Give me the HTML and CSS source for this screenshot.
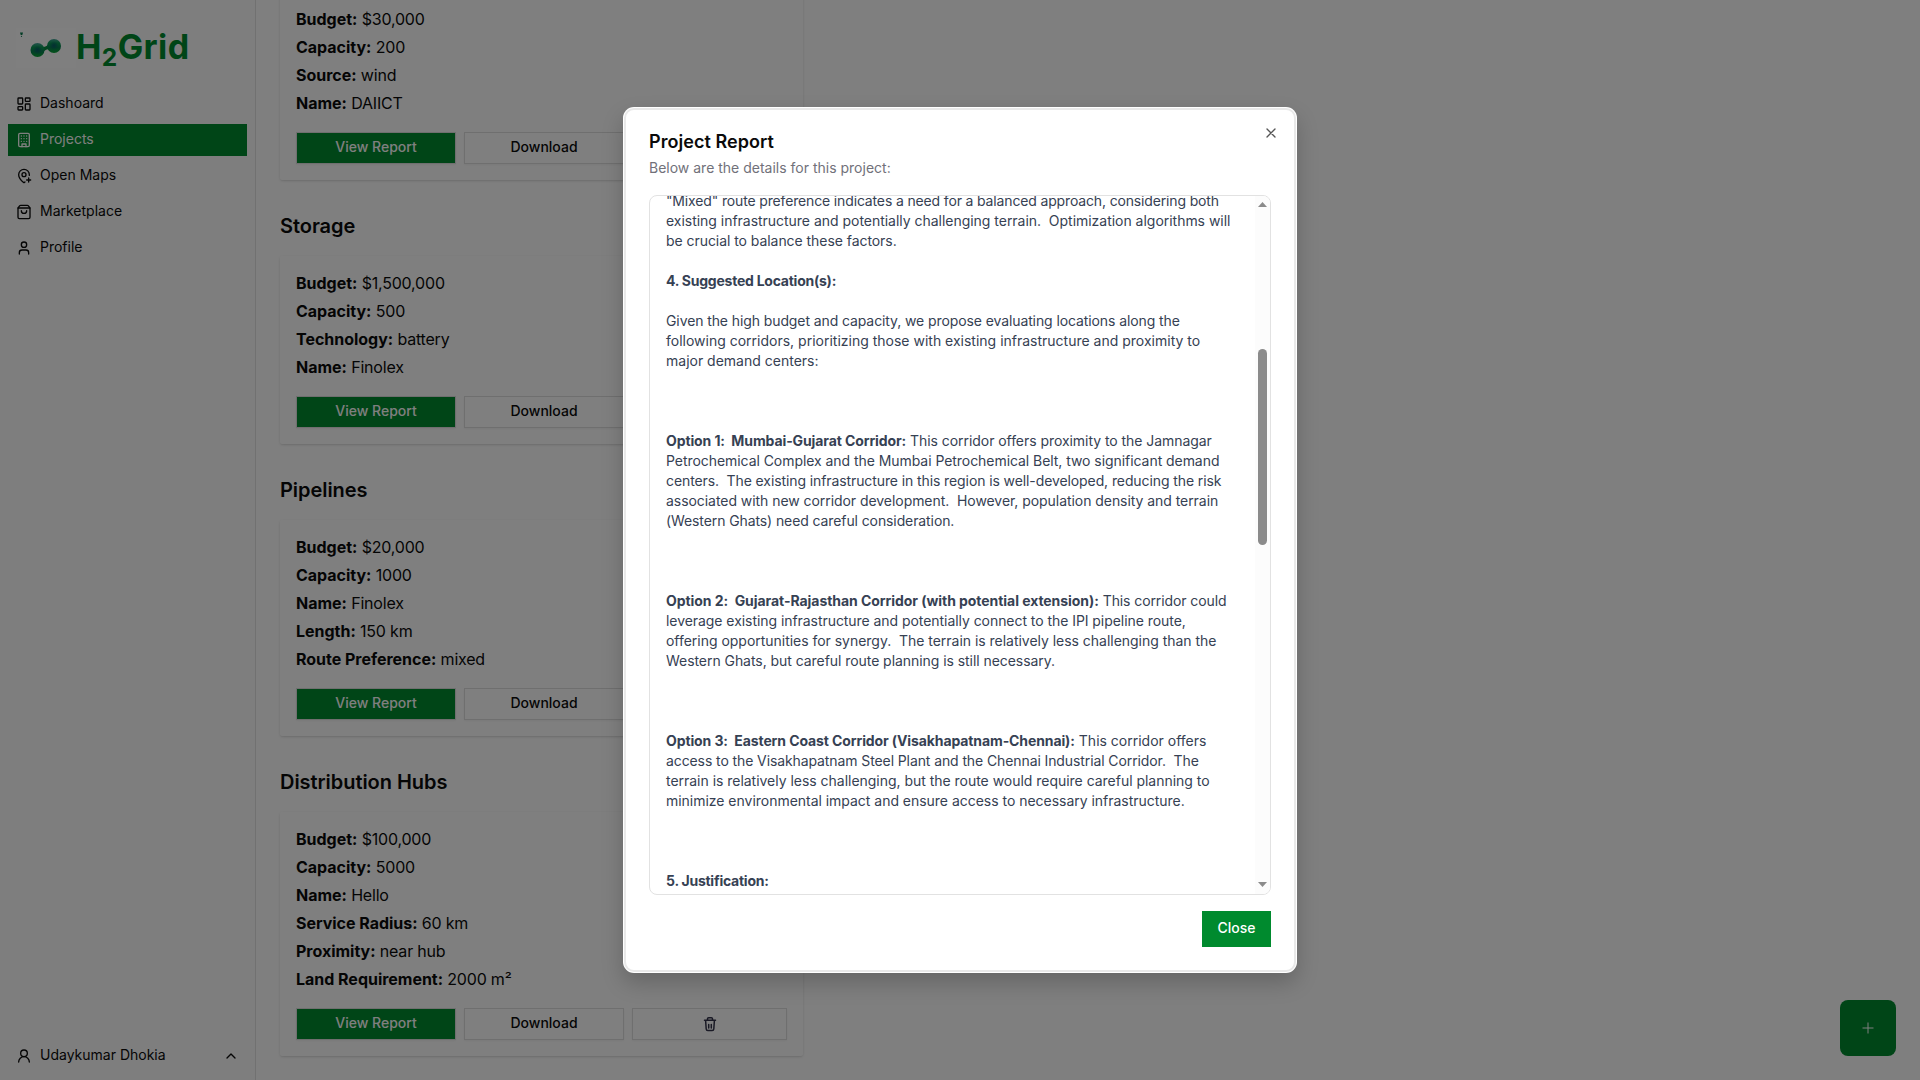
FILE: index.html
```html
<!DOCTYPE html>
<html lang="en">
<head>
<meta charset="utf-8">
<title>H2Grid – Projects</title>
<link rel="stylesheet" href="styles.css">
</head>
<body>
<div class="app">
  <aside class="sidebar">
    <div class="brand">
      <svg class="brand-mark" viewBox="0 0 60 40">
        <defs>
          <linearGradient id="ballTop" x1="0" y1="0" x2="0" y2="1">
            <stop offset="0" stop-color="#48a49a"/><stop offset=".3" stop-color="#0a9a55"/><stop offset=".6" stop-color="#078050"/><stop offset="1" stop-color="#08a335"/>
          </linearGradient>
          <radialGradient id="core"><stop offset="0" stop-color="#0a5c68"/><stop offset="1" stop-color="#0a5c68" stop-opacity="0"/></radialGradient>
        </defs>
        <path d="M24 18.500c4 1.500 7-.5 10-3l2 6c-3-1-6-.5-9 3z" fill="#078a3f"/>
        <circle cx="21.500" cy="22" r="7" fill="url(#ballTop)"/>
        <circle cx="38" cy="18" r="7" fill="url(#ballTop)"/>
        <circle cx="21.500" cy="22" r="4.500" fill="url(#core)"/>
        <circle cx="38" cy="17.500" r="4.500" fill="url(#core)"/>
        <path d="M4 4.500h3l-.7 2.500h-1.600z" fill="#087a4c"/>
        <circle cx="5.500" cy="8.300" r=".6" fill="#087a4c"/>
      </svg>
      <span class="brand-name">H<span class="brand-sub">2</span>Grid</span>
    </div>
    <nav class="nav">
      <a class="nav-item"><svg class="icon" viewBox="0 0 24 24"><rect x="3" y="3" width="7" height="9" rx="1"/><rect x="14" y="3" width="7" height="5" rx="1"/><rect x="14" y="12" width="7" height="9" rx="1"/><rect x="3" y="16" width="7" height="5" rx="1"/></svg><span>Dashoard</span></a>
      <a class="nav-item active"><svg class="icon" viewBox="0 0 24 24"><rect x="4" y="2" width="16" height="20" rx="2"/><path d="M9 22v-4h6v4M8 6h.01M16 6h.01M12 6h.01M12 10h.01M12 14h.01M16 10h.01M16 14h.01M8 10h.01M8 14h.01"/></svg><span>Projects</span></a>
      <a class="nav-item"><svg class="icon" viewBox="0 0 24 24"><path d="M19.914 11.105A7.298 7.298 0 0 0 20 10a8 8 0 0 0-16 0c0 4.993 5.539 10.193 7.399 11.799a1 1 0 0 0 1.202 0 32 32 0 0 0 .824-.738"/><circle cx="12" cy="10" r="3"/><path d="M16 18h6M19 15v6"/></svg><span>Open Maps</span></a>
      <a class="nav-item"><svg class="icon" viewBox="0 0 24 24"><path d="M16 10a4 4 0 0 1-8 0M3.103 6.034h17.794"/><path d="M3.400 5.467a2 2 0 0 0-.4 1.200V20a2 2 0 0 0 2 2h14a2 2 0 0 0 2-2V6.667a2 2 0 0 0-.4-1.200l-2-2.667A2 2 0 0 0 17 2H7a2 2 0 0 0-1.600.8z"/></svg><span>Marketplace</span></a>
      <a class="nav-item"><svg class="icon" viewBox="0 0 24 24"><circle cx="12" cy="7" r="4"/><path d="M19 21v-2a4 4 0 0 0-4-4H9a4 4 0 0 0-4 4v2"/></svg><span>Profile</span></a>
    </nav>
    <div class="nav-item account"><svg class="icon" viewBox="0 0 24 24"><circle cx="12" cy="8" r="5"/><path d="M20 21a8 8 0 0 0-16 0"/></svg><span>Udaykumar Dhokia</span><svg class="icon chevron" viewBox="0 0 24 24"><path d="m18 15-6-6-6 6"/></svg></div>
  </aside>

  <main class="main">
    <section class="card">
      <p><b>Budget:</b> $30,000</p>
      <p><b>Capacity:</b> 200</p>
      <p><b>Source:</b> wind</p>
      <p><b>Name:</b> DAIICT</p>
      <div class="actions"><button class="btn primary">View Report</button><button class="btn">Download</button><button class="btn"></button></div>
    </section>
    <h2>Storage</h2>
    <section class="card">
      <p><b>Budget:</b> $1,500,000</p>
      <p><b>Capacity:</b> 500</p>
      <p><b>Technology:</b> battery</p>
      <p><b>Name:</b> Finolex</p>
      <div class="actions"><button class="btn primary">View Report</button><button class="btn">Download</button><button class="btn"></button></div>
    </section>
    <h2>Pipelines</h2>
    <section class="card">
      <p><b>Budget:</b> $20,000</p>
      <p><b>Capacity:</b> 1000</p>
      <p><b>Name:</b> Finolex</p>
      <p><b>Length:</b> 150 km</p>
      <p><b>Route Preference:</b> mixed</p>
      <div class="actions"><button class="btn primary">View Report</button><button class="btn">Download</button><button class="btn"></button></div>
    </section>
    <h2>Distribution Hubs</h2>
    <section class="card">
      <p><b>Budget:</b> $100,000</p>
      <p><b>Capacity:</b> 5000</p>
      <p><b>Name:</b> Hello</p>
      <p><b>Service Radius:</b> 60 km</p>
      <p><b>Proximity:</b> near hub</p>
      <p><b>Land Requirement:</b> 2000 m²</p>
      <div class="actions"><button class="btn primary">View Report</button><button class="btn">Download</button><button class="btn"><svg class="trash" viewBox="0 0 14 16"><path d="M1.500 4.200h11M4.500 4V2.800Q4.500 1.700 5.600 1.700h2.800Q9.500 1.700 9.500 2.800V4M2.600 4.500l.6 8.500q.1 1.500 1.600 1.500h4.400q1.500 0 1.600-1.500l.6-8.500M5.700 8.500v3.500M8.300 8.500v3.500"/></svg></button></div>
    </section>
  </main>
  <button class="fab"><svg viewBox="0 0 12 12"><path d="M6 .5v11M.5 6h11"/></svg></button>
</div>

<div class="overlay">
  <div class="dialog">
    <div class="dialog-body">
      <header class="dialog-head">
        <div>
          <h1>Project Report</h1>
          <div class="subtitle">Below are the details for this project:</div>
        </div>
        <svg class="icon dismiss" viewBox="0 0 24 24"><path d="M18 6 6 18M6 6l12 12"/></svg>
      </header>
      <div class="report">
        <div class="report-text"><span class="t4">"Mixed" route preference indicates a need for a balanced approach, considering both</span>
<span class="t1">existing infrastructure and potentially challenging terrain.  Optimization algorithms will</span>
<span class="t2">be crucial to balance these factors.</span>

<b class="narrow">4. Suggested Location(s):</b>

<span class="t3">Given the high budget and capacity, we propose evaluating locations along the</span>
following corridors, prioritizing those with existing infrastructure and proximity to
major demand centers:



<b class="snug">Option 1:  Mumbai-Gujarat Corridor:</b><span class="t2"> This corridor offers proximity to the Jamnagar</span>
<span class="t2">Petrochemical Complex and the Mumbai Petrochemical Belt, two significant demand</span>
<span class="t3">centers.  The existing infrastructure in this region is well-developed, reducing the risk</span>
<span class="t2">associated with new corridor development.  However, population density and terrain</span>
<span class="t3">(Western Ghats) need careful consideration.</span>



<b>Option 2:  Gujarat-Rajasthan Corridor (with potential extension):</b><span class="t3"> This corridor could</span>
<span class="t2">leverage existing infrastructure and potentially connect to the IPI pipeline route,</span>
<span class="t1">offering opportunities for synergy.  The terrain is relatively less challenging than the</span>
<span class="t2">Western Ghats, but careful route planning is still necessary.</span>



<b class="snug">Option 3:  Eastern Coast Corridor (Visakhapatnam-Chennai):</b> This corridor offers
<span class="t3">access to the Visakhapatnam Steel Plant and the Chennai Industrial Corridor.  The</span>
<span class="t1">terrain is relatively less challenging, but the route would require careful planning to</span>
<span class="t1">minimize environmental impact and ensure access to necessary infrastructure.</span>



<b class="narrow">5. Justification:</b></div>
        <div class="scrollbar">
          <svg class="arrow" viewBox="0 0 9 5"><path d="M4.500 0 9 5H0z"/></svg>
          <div class="thumb"></div>
          <svg class="arrow end" viewBox="0 0 9 5"><path d="M0 0h9L4.500 5z"/></svg>
        </div>
      </div>
      <footer class="dialog-foot"><button class="close">Close</button></footer>
    </div>
  </div>
</div>
</body>
</html>
```
FILE: styles.css
```css
* { box-sizing: border-box; }
body { margin: 0; height: 1080px; overflow: hidden; background: #fff; color: #0a0a0a; font: 14px/20px Inter, "Liberation Sans", sans-serif; }
h1, h2, p { margin: 0; }
button { font: inherit; color: inherit; border: 0; padding: 0; }

.app { display: flex; height: 1080px; overflow: hidden; }
.icon { width: 16px; height: 16px; flex: none; fill: none; stroke: currentColor; stroke-width: 2; stroke-linecap: round; stroke-linejoin: round; }

.sidebar { width: 256px; flex: none; display: flex; flex-direction: column; padding: 8px 8px 0; background: #fdfdfd; border-right: 1px solid #e2e2e2; }
.brand { display: flex; align-items: center; height: 80px; padding-left: 8px; }
.brand-mark { width: 60px; height: 40px; flex: none; background: #fff; }
.brand-name { color: #008a2e; font-size: 34px; font-weight: 700; line-height: 40px; letter-spacing: .4px; }
.brand-sub { font-size: 24.500px; position: relative; top: 7px; }
.nav { display: flex; flex-direction: column; gap: 4px; }
.nav-item { display: flex; align-items: center; gap: 8px; height: 32px; padding: 0 8px; }
.nav-item span { padding-bottom: 2px; }
.nav-item.active { background: #008a2e; color: #fff; }
.nav-item.account { margin-top: auto; height: 48px; }
.chevron { margin-left: auto; }

.main { width: 571px; margin-top: -8px; padding: 0 24px; }
.card { padding: 15px 16px 16px; border-radius: 2px; box-shadow: 0 1px 3px rgba(0, 0, 0, .12), 0 1px 2px -1px rgba(0, 0, 0, .12); font-size: 16px; line-height: 24px; letter-spacing: -.2px; }
.card p + p { margin-top: 4px; }
.card b { font-weight: 700; letter-spacing: -.02px; }
.main h2 { margin: 32px 0 16px; font-size: 20px; font-weight: 600; line-height: 28px; letter-spacing: -.05px; }
.actions { display: grid; grid-template-columns: 160px 160px 1fr; gap: 8px; margin-top: 17px; letter-spacing: 0; }
.btn { display: flex; align-items: center; justify-content: center; height: 32px; padding-bottom: 2px; background: transparent; border: 1px solid #dedede; font-size: 14px; font-weight: 500; line-height: 20px; box-shadow: 0 1px 2px rgba(0, 0, 0, .05); }
.btn.primary { background: #008a2e; background-clip: padding-box; color: #fff; }
.trash { width: 14px; height: 16px; margin-top: 1px; fill: none; stroke: #33334a; stroke-width: 1.500; stroke-linecap: round; }

.fab { position: absolute; right: 24px; bottom: 24px; width: 56px; height: 56px; display: flex; align-items: center; justify-content: center; border-radius: 8px; background: #008a2e; }
.fab svg { width: 12px; height: 12px; stroke: #fff; stroke-width: 1; }

.overlay { position: absolute; inset: 0; display: flex; align-items: center; justify-content: center; background: rgba(0, 0, 0, .5); }
.dialog { width: 674px; height: 866px; padding: 1px; border-radius: 11px; background: #fff; box-shadow: 0 10px 22px rgba(0, 0, 0, .2); }
.dialog-body { display: flex; flex-direction: column; height: 100%; padding: 22px 23px 23px; border: 2px solid #e9e9e9; border-radius: 10px; }
.dialog-head { display: flex; justify-content: space-between; height: 63px; }
.dialog-head h1 { margin-top: 1px; font-size: 18px; font-weight: 600; line-height: 18px; letter-spacing: .05px; }
.subtitle { margin-top: 7px; color: #71717a; }
.dismiss { margin: -7px -8px 0 0; color: #555; }

.report { display: flex; justify-content: space-between; height: 700px; border: 1px solid #e2e2e2; border-radius: 8px; overflow: hidden; }
.report-text { margin-top: -5px; padding-left: 16px; white-space: pre; color: #364153; }
.report-text b { font-weight: 700; letter-spacing: -.055px; }
.report-text .snug { letter-spacing: -.105px; }
.report-text .narrow { letter-spacing: -.24px; }
.t1 { letter-spacing: -.025px; }
.t2 { letter-spacing: -.055px; }
.t3 { letter-spacing: -.1px; }
.t4 { letter-spacing: -.15px; }
.scrollbar { width: 15px; flex: none; display: flex; flex-direction: column; align-items: center; padding: 6px 0 7px; background: #fcfcfc; }
.arrow { width: 9px; height: 5px; flex: none; fill: #8b8b8b; }
.thumb { width: 9px; height: 196px; margin-top: 142px; border-radius: 5px; background: #8b8b8b; }
.arrow.end { margin-top: auto; }

.dialog-foot { display: flex; justify-content: flex-end; margin-top: 16px; }
.close { width: 69px; height: 36px; padding-bottom: 2px; background: #008a2e; color: #fff; font-weight: 500; }
```
